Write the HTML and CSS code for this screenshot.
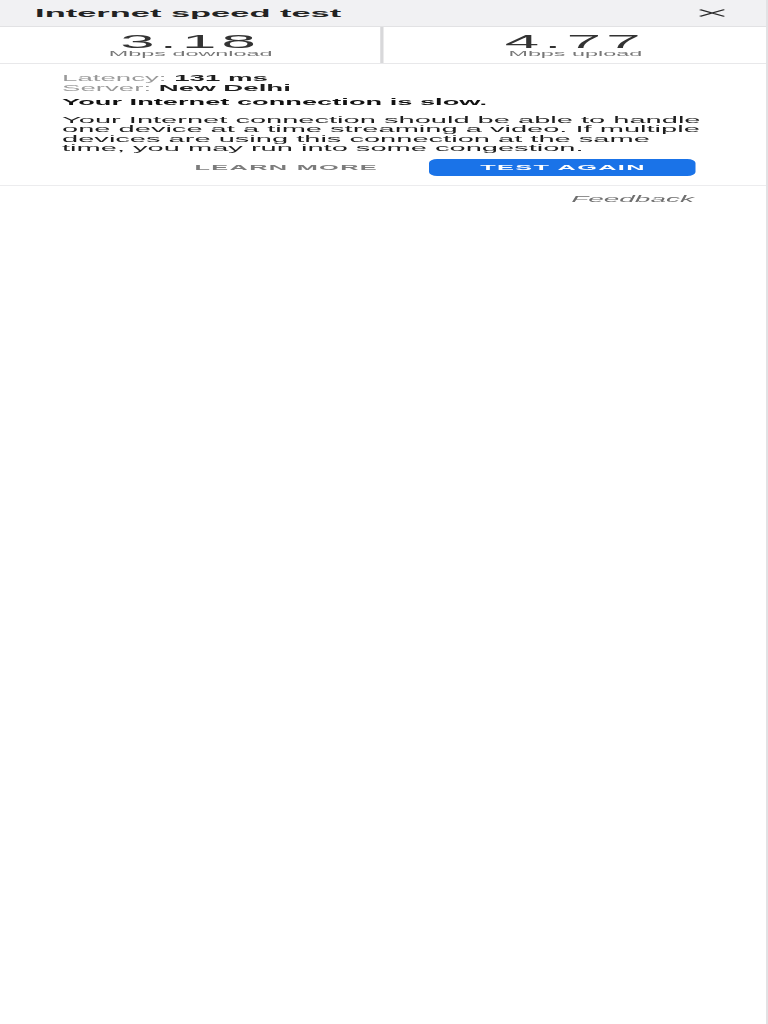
FILE: index.html
```html
<!DOCTYPE html>
<html lang="en">
<head>
<meta charset="utf-8">
<title>Internet speed test</title>
<link rel="stylesheet" href="styles.css">
</head>
<body>
<div class="screen">
  <div class="page">
    <header class="bar">
      <h1 class="title">Internet speed test</h1>
      <button class="close" aria-label="Close">
        <svg class="close-icon" viewBox="0 0 8.3 8" width="8.3" height="8">
          <path d="M0.4 0.6 L7.9 7.4 M7.9 0.6 L0.4 7.4" stroke="#2a2a2a" stroke-width="1" fill="none"/>
        </svg>
      </button>
    </header>
    <section class="stats">
      <div class="stat">
        <div class="stat-value">3.18</div>
        <div class="stat-label">Mbps download</div>
      </div>
      <div class="stat stat-right">
        <div class="stat-value">4.77</div>
        <div class="stat-label">Mbps upload</div>
      </div>
    </section>
    <section class="info">
      <div class="meta"><span class="meta-key">Latency:</span> <span class="meta-val">131 ms</span></div>
      <div class="meta"><span class="meta-key">Server:</span> <span class="meta-val">New Delhi</span></div>
      <p class="verdict">Your Internet connection is slow.</p>
      <p class="desc">Your Internet connection should be able to handle one device at a time streaming a video. If multiple devices are using this connection at the same time, you may run into some congestion.</p>
      <div class="actions">
        <a class="learn" href="#">LEARN MORE</a>
        <button class="again">TEST AGAIN</button>
      </div>
    </section>
    <div class="foot">
      <a class="feedback" href="#">Feedback</a>
    </div>
  </div>
</div>
</body>
</html>
```
FILE: styles.css
```css
html, body {
  margin: 0;
  padding: 0;
  background: #ffffff;
}
body {
  overflow: hidden;
  font-family: "Liberation Sans", Arial, Helvetica, sans-serif;
  color: #222;
}
.screen {
  width: 768px;
  min-height: 100vh;
  box-sizing: border-box;
  border-right: 2px solid #e2e2e4;
  overflow: hidden;
}
.page {
  width: 235.7px;
  transform: scaleX(3.25);
  transform-origin: 0 0;
}
.bar {
  height: 26px;
  background: #f1f1f3;
  border-bottom: 1px solid #e2e2e4;
  display: flex;
  align-items: center;
  justify-content: space-between;
  padding: 0 12.6px 0 10.8px;
}
.title {
  margin: 0;
  font-size: 10.6px;
  font-weight: 700;
  line-height: 26px;
  color: #222;
}
.close {
  border: 0;
  background: none;
  padding: 0;
  margin: 0;
  width: 8.3px;
  height: 8px;
  display: flex;
  margin-top: -1px;
}
.close-icon {
  display: block;
}
.stats {
  display: flex;
  height: 36px;
  border-bottom: 1px solid #e8e8ea;
}
.stat {
  flex: 1;
  text-align: center;
  padding-top: 6.6px;
  box-sizing: border-box;
}
.stat-right {
  border-left: 1.2px solid #d8d8da;
}
.stat-value {
  font-size: 19px;
  line-height: 16px;
  letter-spacing: 1.6px;
  color: #333;
}
.stat-label {
  font-size: 7.2px;
  line-height: 7px;
  margin-top: 0.4px;
  color: #777;
}
.info {
  padding: 10.4px 0 9px 19.1px;
  border-bottom: 1px solid #ececee;
}
.meta {
  font-size: 8.5px;
  line-height: 9.4px;
}
.meta-key {
  color: #9a9a9a;
}
.meta-val {
  color: #1e1e1e;
  font-weight: 700;
}
.verdict {
  margin: 4.2px 0 0;
  font-size: 8.4px;
  line-height: 10px;
  font-weight: 700;
  color: #111;
}
.desc {
  margin: 8.6px 0 0;
  width: 199px;
  font-size: 8.95px;
  line-height: 9.4px;
  color: #1e1e1e;
}
.actions {
  margin-top: 5.6px;
  display: flex;
  align-items: center;
  justify-content: flex-end;
  gap: 16px;
  padding-right: 21.5px;
}
.learn {
  font-size: 7.8px;
  font-weight: 700;
  letter-spacing: 0.4px;
  color: #7c7c7c;
  text-decoration: none;
}
.again {
  width: 81.9px;
  height: 17px;
  border: 0;
  margin: 0;
  padding: 0;
  border-radius: 2.5px / 4px;
  background: #1a73e8;
  color: #ffffff;
  font-family: "Liberation Sans", Arial, Helvetica, sans-serif;
  font-size: 7.8px;
  font-weight: 700;
  letter-spacing: 0.4px;
  line-height: 17px;
}
.foot {
  display: flex;
  justify-content: flex-end;
  padding: 7.7px 22.2px 0 0;
}
.feedback {
  font-size: 8.6px;
  line-height: 10px;
  font-style: italic;
  color: #6f6f6f;
  text-decoration: none;
}
```
